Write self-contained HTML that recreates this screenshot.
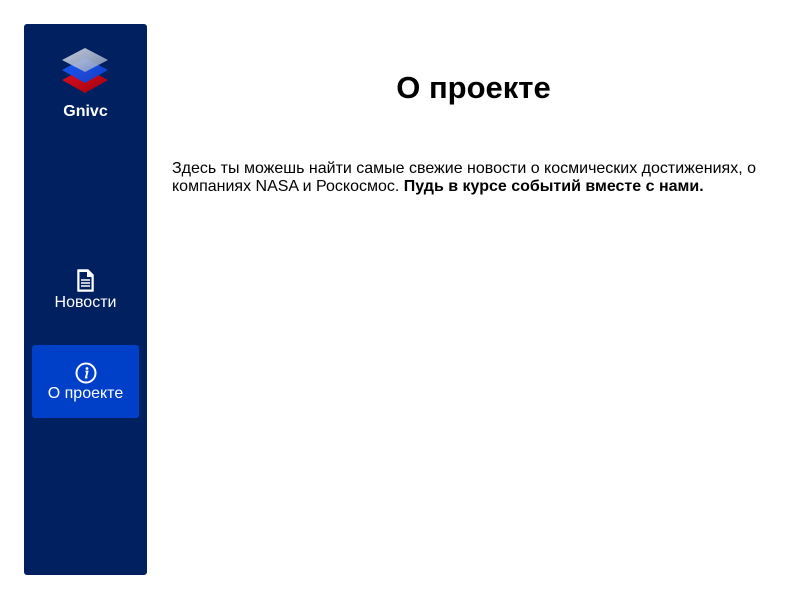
<!DOCTYPE html>
<html><head><meta charset="utf-8"><style>
body{margin:0;width:800px;height:600px;background:#fff;font-family:"Liberation Sans",sans-serif;position:relative;overflow:hidden}
.sb{position:absolute;left:24px;top:24px;width:123px;height:551px;background:#002060;border-radius:3px}
.logo{position:absolute;left:37px;top:22px}
.name{position:absolute;left:0;width:123px;top:79px;text-align:center;color:#fff;font-weight:bold;font-size:16px}
.nav{position:absolute;left:0;width:123px;text-align:center;color:#fff;font-size:16px}
.act{position:absolute;left:8px;top:321px;width:107px;height:73px;background:#0040c8;border-radius:3px}
h1{position:absolute;left:147px;width:653px;top:70px;margin:0;text-align:center;font-size:31px;font-weight:bold}
p{position:absolute;left:172px;top:160px;width:600px;margin:0;font-size:16px;line-height:18px}
</style></head><body>
<div class="sb">
<svg class="logo" width="50" height="50" viewBox="0 0 50 50">
<defs>
<linearGradient id="r" x1="0" y1="0" x2="1" y2="1"><stop offset="0" stop-color="#e01020"/><stop offset="1" stop-color="#a00010"/></linearGradient>
<linearGradient id="b" x1="0" y1="0" x2="1" y2="1"><stop offset="0" stop-color="#1d5cff"/><stop offset="1" stop-color="#0b3fc8"/></linearGradient>
<linearGradient id="w" x1="0" y1="0" x2="1" y2="1"><stop offset="0" stop-color="#e6e9f0"/><stop offset="1" stop-color="#8797b8"/></linearGradient>
</defs>
<polygon points="24,22 47,34 24,47 1,34" fill="url(#r)"/>
<polygon points="24,12 47,24 24,37 1,24" fill="url(#b)" opacity="0.95"/>
<polygon points="24,2 47,14 24,26 1,14" fill="url(#w)" opacity="0.85"/>
</svg>
<div class="name">Gnivc</div>
<svg style="position:absolute;left:52px;top:245px" width="19" height="24" viewBox="0 0 19 24"><path d="M2 1h10l5 5v16H2z" fill="#fff" stroke="#fff" stroke-width="1.5" stroke-linejoin="round"/><path d="M3.5 3h7.5v5h4.5v12.5h-12z" fill="#002060"/><path d="M5 11h9M5 14h9M5 17h9" stroke="#fff" stroke-width="1.6"/></svg>
<div class="nav" style="top:270px">Новости</div>
<div class="act"></div>
<svg style="position:absolute;left:51px;top:338px" width="22" height="22" viewBox="0 0 22 22"><circle cx="11" cy="11" r="9.5" fill="none" stroke="#fff" stroke-width="2"/><circle cx="12" cy="6.5" r="1.4" fill="#fff"/><path d="M10.5 9.5h2l-1.6 6h1.5" stroke="#fff" stroke-width="1.8" fill="none"/></svg>
<div class="nav" style="top:361px">О проекте</div>
</div>
<h1>О проекте</h1>
<p>Здесь ты можешь найти самые свежие новости о космических достижениях, о компаниях NASA и Роскосмос. <b>Пудь в курсе событий вместе с нами.</b></p>
</body></html>
